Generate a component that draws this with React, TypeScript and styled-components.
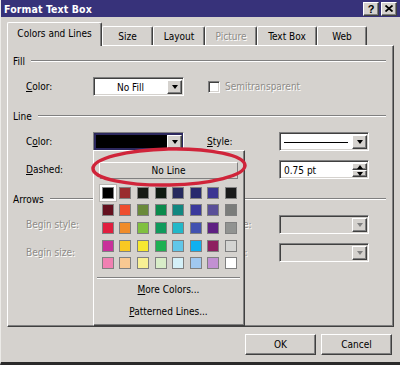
import styled, { createGlobalStyle } from 'styled-components'

const FACE = '#d5d2ce'
const SHADOW = '#808080'
const DARK = '#404040'
const MUTED = '#8e8c88'

const GlobalStyle = createGlobalStyle`
  html, body { margin: 0; padding: 0; background: ${FACE}; }
  body {
    font-family: 'DejaVu Sans Condensed', 'Liberation Sans', sans-serif;
    font-size: 10px;
    color: #000;
  }
`

const Window = styled.div`
  width: 400px;
  height: 365px;
  box-sizing: border-box;
  background: ${FACE};
  border-left: 1px solid #ecebe8;
  border-bottom: 3px solid #2b2a2a;
  display: flex;
  flex-direction: column;
  overflow: hidden;
`

const TitleBar = styled.div`
  height: 17px;
  flex-shrink: 0;
  background: #37327a;
  display: flex;
  align-items: center;
  justify-content: space-between;
  padding: 0 3px 0 3px;
`

const Title = styled.span`
  color: #fff;
  font-weight: bold;
  font-size: 10.5px;
  letter-spacing: 0.1px;
`

const CapButtons = styled.div`
  display: flex;
  gap: 2px;
`

const CapButton = styled.div`
  width: 16px;
  height: 14px;
  box-sizing: border-box;
  background: ${FACE};
  border: 1px solid;
  border-color: #fff ${DARK} ${DARK} #fff;
  box-shadow: inset -1px -1px ${SHADOW};
  display: flex;
  align-items: center;
  justify-content: center;
  font-weight: bold;
  font-size: 11px;
  font-family: 'Liberation Sans', sans-serif;
`

const TabRow = styled.div`
  display: flex;
  align-items: flex-end;
  height: 23px;
  margin-top: 5px;
  padding-left: 6px;
  position: relative;
  z-index: 1;
`

const Tab = styled.div<{ $w: number; $active?: boolean; $disabled?: boolean }>`
  width: ${({ $w }) => $w}px;
  height: ${({ $active }) => ($active ? 24 : 19)}px;
  margin-bottom: ${({ $active }) => ($active ? -1 : 0)}px;
  box-sizing: border-box;
  background: ${FACE};
  border-top: 1px solid #fff;
  border-left: 1px solid #fff;
  border-right: 1px solid ${DARK};
  box-shadow: inset -1px 0 ${SHADOW};
  border-radius: 2px 2px 0 0;
  display: flex;
  align-items: center;
  justify-content: center;
  padding-bottom: ${({ $active }) => ($active ? 3 : 0)}px;
  color: ${({ $disabled }) => ($disabled ? MUTED : '#000')};
  text-shadow: ${({ $disabled }) => ($disabled ? '1px 1px #fff' : 'none')};
`

const Panel = styled.div`
  position: relative;
  margin-left: 6px;
  width: 387px;
  height: 282px;
  flex-shrink: 0;
  box-sizing: border-box;
  border: 1px solid;
  border-color: #fff ${DARK} ${DARK} #fff;
  box-shadow: inset -1px -1px ${SHADOW};
  padding: 8px 6px 0 5px;
  display: flex;
  flex-direction: column;
  gap: 13px;
`

const Group = styled.div`
  display: flex;
  flex-direction: column;
  gap: 9px;
`

const Header = styled.div`
  height: 14px;
  display: flex;
  align-items: center;
  gap: 6px;
`

const Etched = styled.div`
  flex: 1;
  border-top: 1px solid ${SHADOW};
  border-bottom: 1px solid #fff;
  margin-right: 1px;
`

const Row = styled.div`
  display: grid;
  grid-template-columns: 67px 91px 95px 90px;
  height: 19px;
  align-items: center;
  padding-left: 13px;
`

const Label = styled.span<{ $muted?: boolean; $indent?: number }>`
  padding-left: ${({ $indent }) => $indent ?? 0}px;
  color: ${({ $muted }) => ($muted ? MUTED : '#000')};
  text-shadow: ${({ $muted }) => ($muted ? '1px 1px #fff' : 'none')};
  white-space: nowrap;
`

const Combo = styled.div<{ $bg: string; $frame?: string }>`
  height: 19px;
  box-sizing: border-box;
  background: ${({ $bg }) => $bg};
  border: 1px solid;
  border-color: ${SHADOW} #fff #fff ${SHADOW};
  box-shadow: ${({ $frame }) =>
    $frame ? `inset 0 0 0 2px ${$frame}` : `inset 1px 1px ${DARK}, inset -1px -1px ${FACE}`};
  display: flex;
  padding: 2px 1px 1px 2px;
`

const ComboText = styled.div<{ $center?: boolean }>`
  flex: 1;
  display: flex;
  align-items: center;
  justify-content: ${({ $center }) => ($center ? 'center' : 'flex-start')};
  padding-left: 2px;
  padding-right: 4px;
`

const StyleLine = styled.div`
  flex: 1;
  height: 1px;
  background: #000;
`

const DropBtn = styled.div`
  width: 15px;
  box-sizing: border-box;
  background: ${FACE};
  border: 1px solid;
  border-color: #fff ${DARK} ${DARK} #fff;
  box-shadow: inset -1px -1px ${SHADOW};
  display: flex;
  align-items: center;
  justify-content: center;
`

const Arrow = styled.div<{ $up?: boolean; $muted?: boolean }>`
  width: 0;
  height: 0;
  border-left: 3.5px solid transparent;
  border-right: 3.5px solid transparent;
  ${({ $up, $muted }) =>
    $up
      ? `border-bottom: 4px solid ${$muted ? SHADOW : '#000'};`
      : `border-top: 4px solid ${$muted ? SHADOW : '#000'};`}
`

const SpinCol = styled.div`
  width: 15px;
  display: flex;
  flex-direction: column;
`

const SpinBtn = styled(DropBtn)`
  flex: 1;
  width: 100%;
`

const CheckWrap = styled.div`
  display: flex;
  align-items: center;
  gap: 5px;
  padding-left: 24px;
  grid-column: span 2;
`

const CheckBox = styled.div`
  width: 12px;
  height: 12px;
  box-sizing: border-box;
  background: #fff;
  border: 1px solid;
  border-color: ${SHADOW} #fff #fff ${SHADOW};
  box-shadow: inset 1px 1px ${DARK}, inset -1px -1px ${FACE};
`

const Popup = styled.div`
  position: absolute;
  left: 85px;
  top: 104px;
  width: 152px;
  bottom: 0;
  box-sizing: border-box;
  background: ${FACE};
  border: 1px solid;
  border-color: #fff ${DARK} ${DARK} #fff;
  box-shadow: inset -1px -1px ${SHADOW};
  padding: 11px 6px 0 5px;
  display: flex;
  flex-direction: column;
  z-index: 2;
`

const NoLineBtn = styled.div`
  height: 17px;
  box-sizing: border-box;
  border: 1px solid;
  border-color: #fff ${SHADOW} ${SHADOW} #fff;
  display: flex;
  align-items: center;
  justify-content: center;
`

const Swatches = styled.div`
  margin-top: 5px;
  display: grid;
  grid-template-columns: repeat(8, 17.6px);
  grid-auto-rows: 17.6px;
`

const Cell = styled.div`
  display: flex;
  align-items: center;
  justify-content: center;
`

const Swatch = styled.div<{ $c: string; $selected?: boolean }>`
  width: 12px;
  height: 12px;
  box-sizing: border-box;
  background: ${({ $c }) => $c};
  border: 1px solid ${SHADOW};
  ${({ $selected }) =>
    $selected && `box-shadow: 0 0 0 2px #fff, 0 0 0 3px #b8b6b2;`}
`

const Separator = styled.div`
  margin: 5px -2px 0 -2px;
  border-top: 1px solid ${SHADOW};
  border-bottom: 1px solid #fff;
`

const MenuItem = styled.div`
  height: 22px;
  display: flex;
  align-items: center;
  justify-content: center;
`

const Ring = styled.svg`
  position: absolute;
  left: 81px;
  top: 99px;
  z-index: 3;
  pointer-events: none;
  overflow: visible;
`

const Footer = styled.div`
  display: flex;
  justify-content: flex-end;
  gap: 5px;
  padding: 7px 8px 0 0;
`

const Button = styled.div`
  width: 71px;
  height: 21px;
  box-sizing: border-box;
  border: 1px solid;
  border-color: #fff ${DARK} ${DARK} #fff;
  box-shadow: inset -1px -1px ${SHADOW};
  display: flex;
  align-items: center;
  justify-content: center;
`

const colors = [
  ['#000000', '#9a2c2e', '#161a14', '#0e1a10', '#262a5e', '#282a6e', '#3b3592', '#191a1a'],
  ['#64101e', '#ef4e2e', '#6a8a3a', '#0a8a4c', '#118780', '#3b3a9c', '#5a5098', '#7b7d7b'],
  ['#e01e3e', '#ef8c2a', '#80c040', '#109a5c', '#22b8c8', '#4252b0', '#5e2082', '#919391'],
  ['#c8309a', '#f8c822', '#f6e830', '#1eb052', '#60c6e8', '#10b0f0', '#8e2060', '#d4d4d2'],
  ['#f080b2', '#f8c892', '#f8f094', '#d8ecc8', '#d4f0f8', '#a0c8f0', '#c290d2', '#ffffff'],
]

function Drop({ muted }: { muted?: boolean }) {
  return (
    <DropBtn>
      <Arrow $muted={muted} />
    </DropBtn>
  )
}

export default function App() {
  return (
    <>
      <GlobalStyle />
      <Window>
        <TitleBar>
          <Title>Format Text Box</Title>
          <CapButtons>
            <CapButton>?</CapButton>
            <CapButton>
              <svg width="8" height="7" viewBox="0 0 8 7">
                <path d="M0.5 0.5 L7.5 6.5 M7.5 0.5 L0.5 6.5" stroke="#000" strokeWidth="1.8" />
              </svg>
            </CapButton>
          </CapButtons>
        </TitleBar>

        <TabRow>
          <Tab $w={95} $active>Colors and Lines</Tab>
          <Tab $w={51}>Size</Tab>
          <Tab $w={52}>Layout</Tab>
          <Tab $w={52} $disabled>Picture</Tab>
          <Tab $w={60}>Text Box</Tab>
          <Tab $w={50}>Web</Tab>
        </TabRow>

        <Panel>
          <Group>
            <Header>Fill<Etched /></Header>
            <Row>
              <Label><u>C</u>olor:</Label>
              <Combo $bg="#fff">
                <ComboText $center>No Fill</ComboText>
                <Drop />
              </Combo>
              <CheckWrap>
                <CheckBox />
                <Label $muted>Semitransparent</Label>
              </CheckWrap>
            </Row>
          </Group>

          <Group>
            <Header>Line<Etched /></Header>
            <Row>
              <Label>C<u>o</u>lor:</Label>
              <Combo $bg="#000" $frame="#2c285e">
                <ComboText />
                <Drop />
              </Combo>
              <Label $indent={23}><u>S</u>tyle:</Label>
              <Combo $bg="#fff">
                <ComboText><StyleLine /></ComboText>
                <Drop />
              </Combo>
            </Row>
            <Row>
              <Label><u>D</u>ashed:</Label>
              <span />
              <Label $indent={23}><u>W</u>eight:</Label>
              <Combo $bg="#fff">
                <ComboText>0.75 pt</ComboText>
                <SpinCol>
                  <SpinBtn><Arrow $up /></SpinBtn>
                  <SpinBtn><Arrow /></SpinBtn>
                </SpinCol>
              </Combo>
            </Row>
          </Group>

          <Group>
            <Header>Arrows<Etched /></Header>
            <Row>
              <Label $muted>Begin style:</Label>
              <span />
              <Label $muted $indent={23}>End style:</Label>
              <Combo $bg={FACE}>
                <ComboText />
                <Drop muted />
              </Combo>
            </Row>
            <Row>
              <Label $muted>Begin size:</Label>
              <span />
              <Label $muted $indent={23}>End size:</Label>
              <Combo $bg={FACE}>
                <ComboText />
                <Drop muted />
              </Combo>
            </Row>
          </Group>

          <Popup>
            <NoLineBtn>No Line</NoLineBtn>
            <Swatches>
              {colors.flat().map((c, i) => (
                <Cell key={i}>
                  <Swatch $c={c} $selected={i === 0} />
                </Cell>
              ))}
            </Swatches>
            <Separator />
            <MenuItem><span><u>M</u>ore Colors...</span></MenuItem>
            <MenuItem><span><u>P</u>atterned Lines...</span></MenuItem>
          </Popup>

          <Ring width="166" height="44" viewBox="0 0 166 44">
            <ellipse
              cx="80"
              cy="22"
              rx="76"
              ry="18"
              fill="none"
              stroke="#d0243a"
              strokeWidth="3.5"
              transform="rotate(-1.2 80 22)"
            />
          </Ring>
        </Panel>

        <Footer>
          <Button>OK</Button>
          <Button>Cancel</Button>
        </Footer>
      </Window>
    </>
  )
}
